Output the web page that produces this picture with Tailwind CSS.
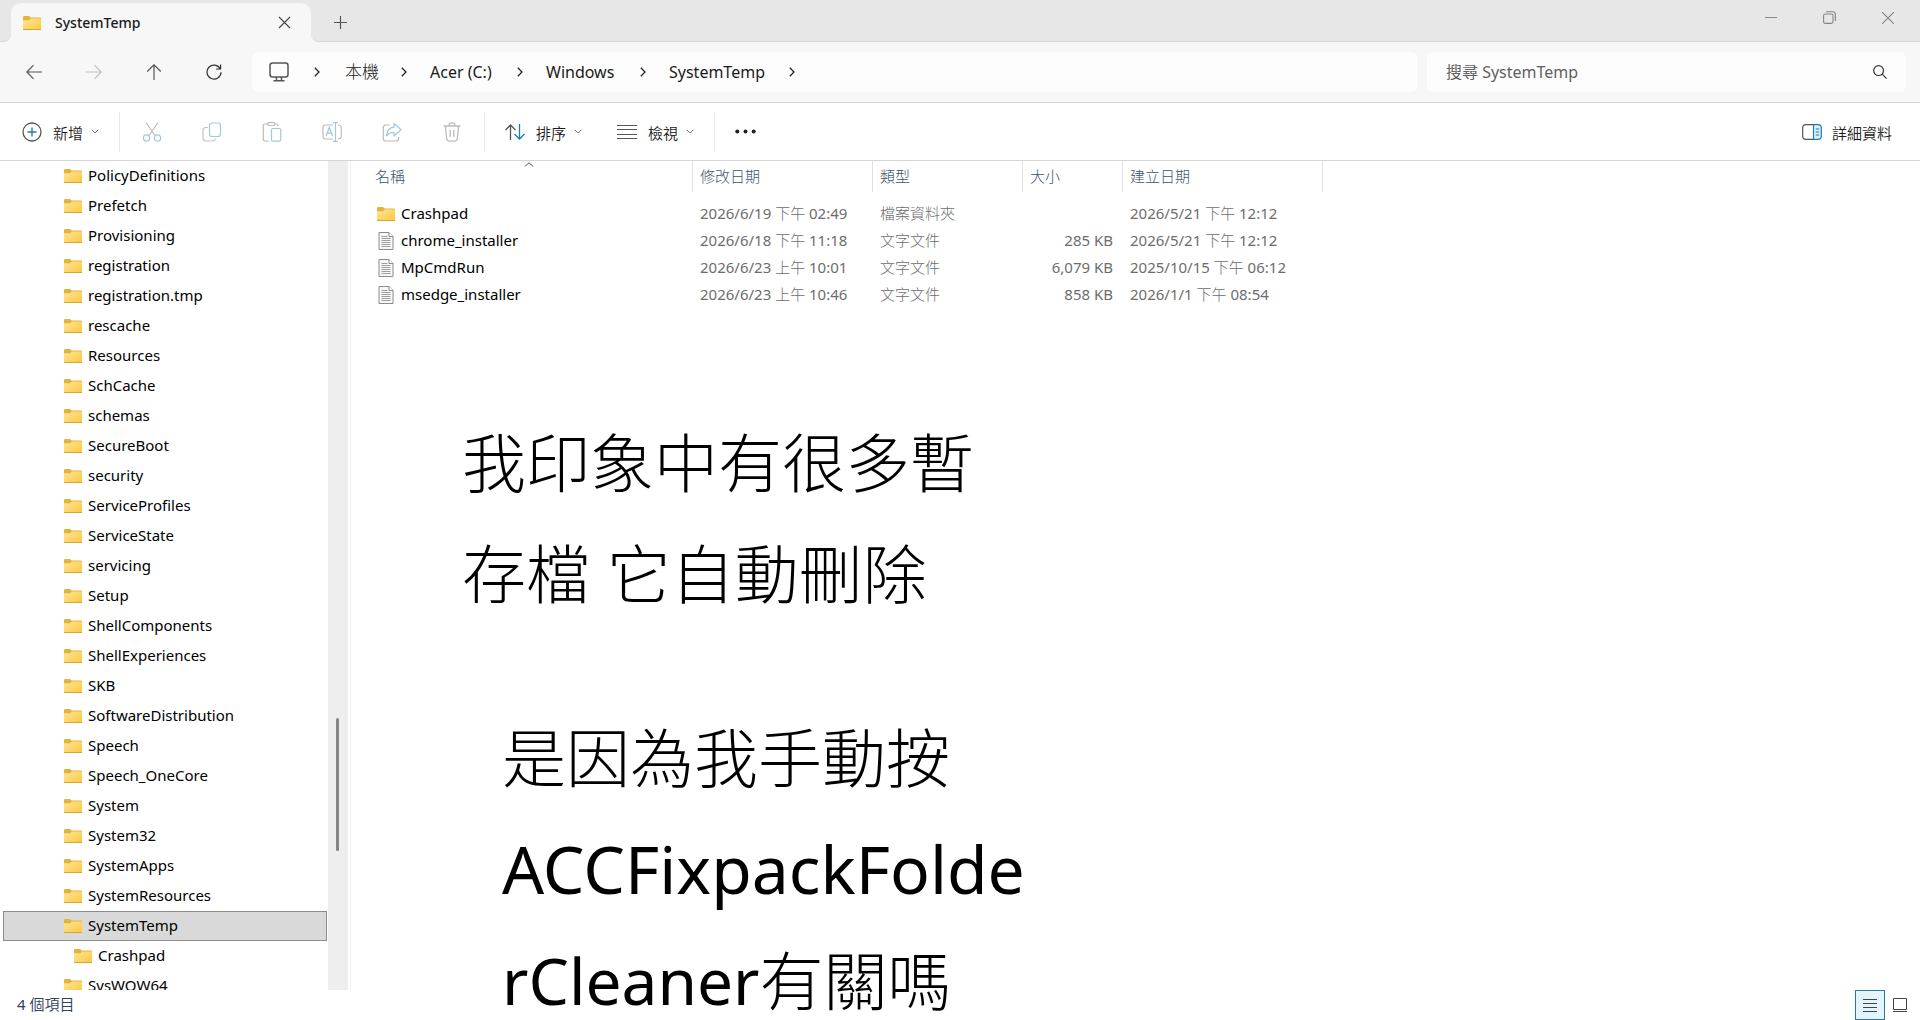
<!DOCTYPE html>
<html lang="zh-Hant">

<head>
    <meta charset="UTF-8">
    <meta name="viewport" content="width=device-width, initial-scale=1.0">
    <title>SystemTemp</title>
    <script src="https://cdn.jsdelivr.net/npm/@tailwindcss/browser@4"></script>
</head>

<body class="relative flex h-screen flex-col overflow-hidden bg-white font-['Noto_Sans','Noto_Sans_CJK_TC',sans-serif] text-[15px] text-[#1a1a1a]">
    <!-- Shared icons -->
    <svg class="absolute size-0" aria-hidden="true">
        <defs>
            <linearGradient id="folderFill" x1="0" y1="0" x2="1" y2="1">
                <stop offset="0" stop-color="#ffe596" />
                <stop offset="1" stop-color="#fbc840" />
            </linearGradient>
            <symbol id="folder" viewBox="0 0 18 14">
                <path d="M0 1.2Q0 0 1.2 0H6l1.6 1.4H17Q18 1.4 18 2.4V6H0z" fill="#e3b43c" />
                <path d="M0 4.2h6.2L7.8 2.6H18V13Q18 14 17 14H1Q0 14 0 13z" fill="url(#folderFill)" />
                <path d="M0 13.5h18" stroke="#d3a53c" stroke-width="1" />
            </symbol>
            <symbol id="textfile" viewBox="0 0 15 18">
                <path d="M.5.5h10l4 4v13H.5z" fill="#f7f7f7" stroke="#8b8b8b" />
                <path d="M10.5.5v4h4" fill="#fff" stroke="#8b8b8b" />
                <path d="M3 4.5h6M3 6.5h9M3 8.5h9M3 10.5h9M3 12.5h9M3 14.5h9" stroke="#9a9fa3" />
            </symbol>
            <symbol id="right" viewBox="0 0 6 10">
                <path d="M.8.8 5 5 .8 9.2" fill="none" stroke="#222" stroke-width="1.3" />
            </symbol>
            <symbol id="down" viewBox="0 0 8 5">
                <path d="M.8.8 4 4 7.2.8" fill="none" stroke="#777" />
            </symbol>
        </defs>
    </svg>

    <!-- Tab strip -->
    <header class="flex h-[42px] shrink-0 items-end bg-[#f7f7f7]">
        <div class="h-full w-[11px] rounded-br-lg border-b border-[#d9d9d9] bg-[#e7e7e7]"></div>
        <div class="flex h-full w-[300px] bg-[#e7e7e7] pt-[3px]">
            <div class="flex w-full items-center rounded-t-[10px] bg-[#f7f7f7] pl-3 pr-5">
                <svg class="h-[14px] w-[18px]"><use href="#folder" /></svg>
                <span class="ml-[14px] grow text-[14px] leading-5 font-medium">SystemTemp</span>
                <button aria-label="關閉索引標籤">
                    <svg class="size-[13px]" viewBox="0 0 13 13" stroke="#444" stroke-width="1.1"><path d="m1 1 11 11M12 1 1 12" /></svg>
                </button>
            </div>
        </div>
        <div class="flex h-full grow items-center rounded-bl-lg border-b border-[#d9d9d9] bg-[#e7e7e7] pl-[23px]">
            <button class="mt-1" aria-label="新增索引標籤">
                <svg class="size-[13px]" viewBox="0 0 13 13" stroke="#555" stroke-width="1.2"><path d="M6.5 0v13M0 6.5h13" /></svg>
            </button>
            <div class="ml-auto mb-[6px] flex gap-[46px] pr-[26px]">
                <button aria-label="最小化">
                    <svg class="size-3" viewBox="0 0 12 12" stroke="#8a8a8a"><path d="M0 5.5h12" /></svg>
                </button>
                <button aria-label="還原">
                    <svg class="size-[13px]" viewBox="0 0 13 13" fill="none" stroke="#858585" stroke-width="1.1"><rect x=".6" y="3" width="9.4" height="9.4" rx="1.6" /><path d="M3 .8h6.6q2.8 0 2.8 2.8V10" /></svg>
                </button>
                <button aria-label="關閉">
                    <svg class="size-3" viewBox="0 0 12 12" stroke="#858585" stroke-width="1.1"><path d="m0 0 12 12M12 0 0 12" /></svg>
                </button>
            </div>
        </div>
    </header>

    <!-- Navigation row -->
    <nav class="flex h-[61px] shrink-0 items-center border-b border-[#d5d5d5] bg-[#f7f7f7] pr-[14px]">
        <div class="flex w-[252px] shrink-0 gap-11 pl-[26px]">
            <button aria-label="上一頁"><svg class="size-4" viewBox="0 0 16 16" fill="none" stroke="#555" stroke-width="1.2"><path d="M16 8H1M7.5 1.2.8 8l6.7 6.8" /></svg></button>
            <button aria-label="下一頁" disabled><svg class="size-4" viewBox="0 0 16 16" fill="none" stroke="#c0c0c0" stroke-width="1.2"><path d="M0 8h15M8.5 1.2 15.2 8l-6.7 6.8" /></svg></button>
            <button aria-label="上一層"><svg class="size-4" viewBox="0 0 16 16" fill="none" stroke="#555" stroke-width="1.2"><path d="M8 16V1M1.2 7.5 8 .8l6.8 6.7" /></svg></button>
            <button aria-label="重新整理"><svg class="size-4" viewBox="0 0 16 16" fill="none" stroke="#333" stroke-width="1.2"><path d="M14.3 5A7 7 0 1 0 15 8.2M14.6.4V5H10" /></svg></button>
        </div>
        <div class="flex h-10 grow items-center rounded-md bg-[#fdfdfd] pl-[17px] text-[16px] leading-6">
            <svg class="h-5 w-5" viewBox="0 0 20 20" fill="none" stroke="#555" stroke-width="1.5"><rect x="1" y="1" width="18" height="14" rx="2.5" /><path d="M7.5 15v3.5M12.5 15v3.5M4.5 18.7h11" /></svg>
            <svg class="ml-[25px] h-[10px] w-[6px]"><use href="#right" /></svg>
            <a href="#" class="w-[81px] pl-[25px] text-[17px] font-light whitespace-nowrap">本機</a>
            <svg class="h-[10px] w-[6px]"><use href="#right" /></svg>
            <a href="#" class="w-[110px] pl-[23px] whitespace-nowrap">Acer (C:)</a>
            <svg class="h-[10px] w-[6px]"><use href="#right" /></svg>
            <a href="#" class="w-[117px] pl-[23px] whitespace-nowrap">Windows</a>
            <svg class="h-[10px] w-[6px]"><use href="#right" /></svg>
            <a href="#" class="w-[143px] pl-[23px] whitespace-nowrap">SystemTemp</a>
            <svg class="h-[10px] w-[6px]"><use href="#right" /></svg>
        </div>
        <label class="ml-[10px] flex h-10 w-[479px] shrink-0 items-center rounded-md bg-[#fdfdfd] pr-[19px] pl-[19px]">
            <input type="text" aria-label="搜尋 SystemTemp" placeholder="搜尋 SystemTemp" class="min-w-0 grow text-[16px] leading-6 outline-none placeholder:text-[#606060]">
            <svg class="size-[14px]" viewBox="0 0 14 14" fill="none" stroke="#333" stroke-width="1.2"><circle cx="5.6" cy="5.6" r="4.9" /><path d="m9.2 9.2 4.4 4.4" /></svg>
        </label>
    </nav>

    <!-- Command bar -->
    <div class="flex h-[58px] shrink-0 items-center border-b border-[#d5d5d5] pr-7 pl-[22px] font-[350]">
        <button class="flex items-center">
            <svg class="size-5" viewBox="0 0 20 20" fill="none"><circle cx="10" cy="10" r="9" stroke="#555" stroke-width="1.3" /><path d="M10 5.5v9M5.5 10h9" stroke="#1a7db5" stroke-width="1.4" /></svg>
            <span class="mr-2 ml-[11px] pt-0.5 leading-5">新增</span>
            <svg class="h-[5px] w-2"><use href="#down" /></svg>
        </button>
        <div class="ml-5 h-10 w-px bg-[#e8e8e8]"></div>
        <div class="flex gap-10 px-[22px]">
            <button aria-label="剪下" disabled><svg class="size-5" viewBox="0 0 20 20" fill="none" stroke-width="1.2"><path d="m4 .5 9 13M16 .5l-9 13" stroke="#bcbcbc" /><circle cx="4.5" cy="16" r="3.2" stroke="#9fc8e2" /><circle cx="15.5" cy="16" r="3.2" stroke="#9fc8e2" /></svg></button>
            <button aria-label="複製" disabled><svg class="size-5" viewBox="0 0 20 20" fill="none" stroke-width="1.2"><path d="M6 5.5H4Q1 5.5 1 8v8q0 3 3 3h6q3 0 3.5-2.5" stroke="#c4c4c4" /><rect x="7.5" y="1" width="11" height="13.5" rx="2.5" stroke="#9fc8e2" /></svg></button>
            <button aria-label="貼上" disabled><svg class="size-5" viewBox="0 0 20 20" fill="none" stroke-width="1.2"><path d="M6 2H3Q1.3 2 1.3 4v13q0 2 2 2H7M13 2h1.5Q16 2 16 4" stroke="#bcbcbc" /><rect x="5.5" y=".7" width="7.5" height="2.8" rx="1.4" stroke="#bcbcbc" /><rect x="9.5" y="6.5" width="9.3" height="12.7" rx="1.5" stroke="#9fc8e2" /></svg></button>
            <button aria-label="重新命名" disabled><svg class="size-5" viewBox="0 0 20 20" fill="none" stroke-width="1.2"><path d="M11 3H3.5Q1 3 1 5.5v9Q1 17 3.5 17H11M16 3q3.3 0 3.3 3v8q0 3-3.3 3" stroke="#bcbcbc" /><path d="M13.5 1v18M11 .7h5M11 19.3h5M4 14l3.3-8.5L10.6 14M5.2 11.2h4.2" stroke="#9fc8e2" /></svg></button>
            <button aria-label="共用" disabled><svg class="size-5" viewBox="0 0 20 20" fill="none" stroke-width="1.2" stroke-linejoin="round"><path d="M7.5 3H4Q1.3 3 1.3 5.5v10.7Q1.3 19 4 19h10q2.7 0 2.7-2.8V15" stroke="#bcbcbc" /><path d="m12 1.5 7 6.3-7 6.2v-3.6q-5 0-7.3 3.4Q5 5.8 12 5.2z" stroke="#9fc8e2" /></svg></button>
            <button aria-label="刪除" disabled><svg class="size-5" viewBox="0 0 20 20" fill="none" stroke="#bcbcbc" stroke-width="1.3"><path d="M1.5 4h17M7 3.8q0-3 3-3t3 3M3.3 4l1.4 12.5Q5 19.2 7.2 19.2h5.6q2.2 0 2.5-2.7L16.7 4M8.2 8v7M11.8 8v7" /></svg></button>
        </div>
        <div class="h-10 w-px bg-[#e8e8e8]"></div>
        <button class="ml-5 flex items-center">
            <svg class="h-4 w-5" viewBox="0 0 20 16" fill="none" stroke-width="1.3"><path d="M5.5 16V1M.5 6l5-5 5 5" stroke="#555" /><path d="M14.5 0v15M9.5 10l5 5 5-5" stroke="#1a7db5" /></svg>
            <span class="mr-2 ml-[11px] pt-0.5 leading-5">排序</span>
            <svg class="h-[5px] w-2"><use href="#down" /></svg>
        </button>
        <button class="ml-[35px] flex items-center">
            <svg class="h-[14px] w-5" viewBox="0 0 20 14" stroke="#555" stroke-width="1.1"><path d="M0 .5h20M0 4.5h20M0 9.5h20M0 13.5h20" /></svg>
            <span class="mr-2 ml-[11px] pt-0.5 leading-5">檢視</span>
            <svg class="h-[5px] w-2"><use href="#down" /></svg>
        </button>
        <div class="ml-5 h-10 w-px bg-[#e8e8e8]"></div>
        <button class="ml-5" aria-label="更多"><svg class="h-[5px] w-[21px]" viewBox="0 0 21 5" fill="#222"><circle cx="2.3" cy="2.5" r="2" /><circle cx="10.5" cy="2.5" r="2" /><circle cx="18.7" cy="2.5" r="2" /></svg></button>
        <button class="ml-auto flex items-center">
            <svg class="h-4 w-5" viewBox="0 0 20 16" fill="none" stroke-width="1.2"><path d="M11.5.7H4Q.7.7.7 4v8q0 3.3 3.3 3.3h7.5" stroke="#555" /><path d="M11.5.7H16q3.3 0 3.3 3.3v8q0 3.3-3.3 3.3h-4.5z" fill="#def1fb" stroke="#1a7db5" /><path d="M13.7 5h3.5M13.7 8h3.5M13.7 11h3.5" stroke="#1a7db5" /></svg>
            <span class="ml-[10px] pt-0.5 leading-5">詳細資料</span>
        </button>
    </div>

    <!-- Folder tree and file list -->
    <div class="flex min-h-0 grow">
        <aside class="flex w-[351px] shrink-0 border-r border-[#f0f0f0]">
            <ul id="tree" class="w-[328px] overflow-hidden pr-px pl-[3px] text-black"></ul>
            <div class="w-5 bg-[#eeeeee] px-2 pt-[557px]">
                <div class="h-[133px] w-[3px] rounded-full bg-[#858585]"></div>
            </div>
        </aside>

        <main class="min-w-0 grow">
            <table class="w-[972px] table-fixed text-left leading-[27px] text-[#6d6d6d]">
                <colgroup>
                    <col class="w-[342px]">
                    <col class="w-[180px]">
                    <col class="w-[150px]">
                    <col class="w-[100px]">
                    <col class="w-[200px]">
                </colgroup>
                <thead class="leading-[30px] text-[#3d526d]">
                    <tr class="h-[39px] align-top">
                        <th class="p-0 font-light" aria-sort="ascending">
                            <div class="relative h-[31px] border-r border-[#e2e2e2] pl-6">名稱
                                <svg class="absolute top-px left-[173px] h-[5px] w-[10px]" viewBox="0 0 10 5" fill="none" stroke="#555"><path d="M.8 4.5 5 .8l4.2 3.7" /></svg>
                            </div>
                        </th>
                        <th class="p-0 font-light"><div class="h-[31px] border-r border-[#e2e2e2] pl-[7px]">修改日期</div></th>
                        <th class="p-0 font-light"><div class="h-[31px] border-r border-[#e2e2e2] pl-[7px]">類型</div></th>
                        <th class="p-0 font-light"><div class="h-[31px] border-r border-[#e2e2e2] pl-[7px]">大小</div></th>
                        <th class="p-0 font-light"><div class="h-[31px] border-r border-[#e2e2e2] pl-[7px]">建立日期</div></th>
                    </tr>
                </thead>
                <tbody>
                    <tr>
                        <td class="p-0"><div class="flex items-center gap-[6px] pl-[26px] text-black"><svg class="h-[14px] w-[18px]"><use href="#folder" /></svg>Crashpad</div></td>
                        <td class="p-0 pl-[7px]">2026/6/19 <span class="font-light">下午</span> 02:49</td>
                        <td class="p-0 pl-[7px] font-light">檔案資料夾</td>
                        <td class="p-0 pr-[10px] text-right"></td>
                        <td class="p-0 pl-[7px]">2026/5/21 <span class="font-light">下午</span> 12:12</td>
                    </tr>
                    <tr>
                        <td class="p-0"><div class="flex items-center gap-[6px] pl-[26px] text-black"><svg class="h-[18px] w-[18px]"><use href="#textfile" /></svg>chrome_installer</div></td>
                        <td class="p-0 pl-[7px]">2026/6/18 <span class="font-light">下午</span> 11:18</td>
                        <td class="p-0 pl-[7px] font-light">文字文件</td>
                        <td class="p-0 pr-[10px] text-right">285 KB</td>
                        <td class="p-0 pl-[7px]">2026/5/21 <span class="font-light">下午</span> 12:12</td>
                    </tr>
                    <tr>
                        <td class="p-0"><div class="flex items-center gap-[6px] pl-[26px] text-black"><svg class="h-[18px] w-[18px]"><use href="#textfile" /></svg>MpCmdRun</div></td>
                        <td class="p-0 pl-[7px]">2026/6/23 <span class="font-light">上午</span> 10:01</td>
                        <td class="p-0 pl-[7px] font-light">文字文件</td>
                        <td class="p-0 pr-[10px] text-right">6,079 KB</td>
                        <td class="p-0 pl-[7px]">2025/10/15 <span class="font-light">下午</span> 06:12</td>
                    </tr>
                    <tr>
                        <td class="p-0"><div class="flex items-center gap-[6px] pl-[26px] text-black"><svg class="h-[18px] w-[18px]"><use href="#textfile" /></svg>msedge_installer</div></td>
                        <td class="p-0 pl-[7px]">2026/6/23 <span class="font-light">上午</span> 10:46</td>
                        <td class="p-0 pl-[7px] font-light">文字文件</td>
                        <td class="p-0 pr-[10px] text-right">858 KB</td>
                        <td class="p-0 pl-[7px]">2026/1/1 <span class="font-light">下午</span> 08:54</td>
                    </tr>
                </tbody>
            </table>
        </main>
    </div>

    <!-- Status bar -->
    <footer class="flex h-[30px] shrink-0 items-center pl-[17px] text-[#2f4259]">
        <span class="pb-0.5 leading-5">4 <span class="font-[350]">個項目</span></span>
        <button class="ml-auto flex size-[30px] items-center justify-center border border-[#2b7a9b] bg-[#e3f4fc]" aria-label="詳細資料檢視">
            <svg class="h-[13px] w-[14px]" viewBox="0 0 14 13" stroke="#444"><path d="M0 .5h14M0 4.5h14M0 8.5h14M0 12.5h14" /></svg>
        </button>
        <button class="mr-[13px] ml-2" aria-label="大圖示檢視">
            <svg class="size-[14px]" viewBox="0 0 14 14" fill="none" stroke="#444"><path d="M.5.5h13v11H.5zM0 13.5h14" /></svg>
        </button>
    </footer>

    <!-- Notes written over the window -->
    <p class="absolute top-[407px] left-[462px] text-[64px] leading-[111px] font-light whitespace-nowrap text-black">我印象中有很多暫<br>存檔 它自動刪除</p>
    <p class="absolute top-[702px] left-[502px] text-[64px] leading-[111px] font-light whitespace-nowrap text-black">是因為我手動按<br><span class="text-[66px] font-normal">ACCFixpackFolde</span><br><span class="font-normal">rCleaner</span>有關嗎</p>

    <script>
        var folders = ['PolicyDefinitions', 'Prefetch', 'Provisioning', 'registration', 'registration.tmp', 'rescache', 'Resources',
            'SchCache', 'schemas', 'SecureBoot', 'security', 'ServiceProfiles', 'ServiceState', 'servicing', 'Setup',
            'ShellComponents', 'ShellExperiences', 'SKB', 'SoftwareDistribution', 'Speech', 'Speech_OneCore', 'System',
            'System32', 'SystemApps', 'SystemResources', 'SystemTemp', '>Crashpad', 'SysWOW64'];
        document.getElementById('tree').innerHTML = folders.map(function (name) {
            var row = 'flex h-[30px] items-center gap-[6px] border border-transparent pl-[60px]';
            if (name === 'SystemTemp') {
                row = 'flex h-[30px] items-center gap-[6px] border border-[#8c8c8c] bg-[#d9d9d9] pl-[60px]';
            }
            // child of the selected folder
            if (name[0] === '>') {
                row = 'flex h-[30px] items-center gap-[6px] border border-transparent pl-[70px]';
                name = name.slice(1);
            }
            return '<li class="' + row + '"><svg class="h-[14px] w-[18px]"><use href="#folder" /></svg><span class="pb-0.5 leading-5">' + name + '</span></li>';
        }).join('');
    </script>
</body>

</html>
